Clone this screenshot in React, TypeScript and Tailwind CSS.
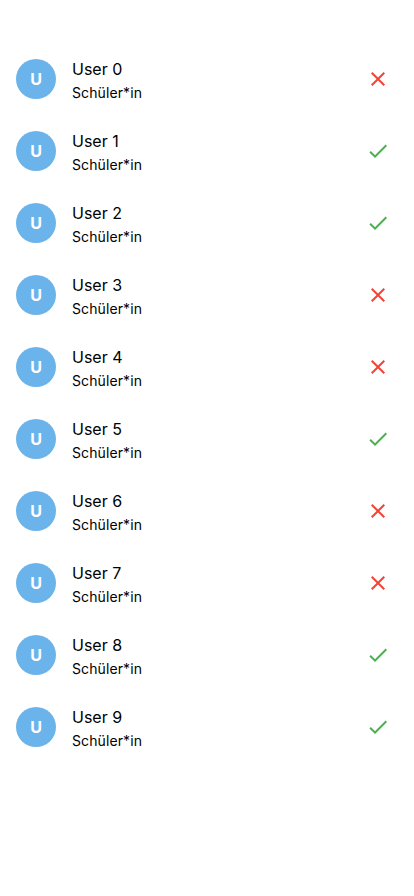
import React from "react";
import { MdClose, MdCheck } from "react-icons/md";

const users = [false, true, true, false, false, true, false, false, true, true];

export default function App() {
  return (
    <div className="min-h-screen bg-white pt-[43px] font-['Inter',sans-serif] text-black">
      {users.map((ok, i) => (
        <div key={i} className="flex h-[72px] items-center pl-4 pr-6">
          <div className="flex h-10 w-10 shrink-0 items-center justify-center rounded-full bg-[#6ab4eb] text-base font-bold text-white">
            U
          </div>
          <div className="ml-4 flex flex-1 flex-col gap-[2px] pt-[2px]">
            <span className="text-base leading-6">User {i}</span>
            <span className="text-sm leading-5 tracking-[0.1px]">Schüler*in</span>
          </div>
          {ok ? (
            <MdCheck className="h-6 w-6 text-[#4caf50]" />
          ) : (
            <MdClose className="h-6 w-6 text-[#f44336]" />
          )}
        </div>
      ))}
    </div>
  );
}
